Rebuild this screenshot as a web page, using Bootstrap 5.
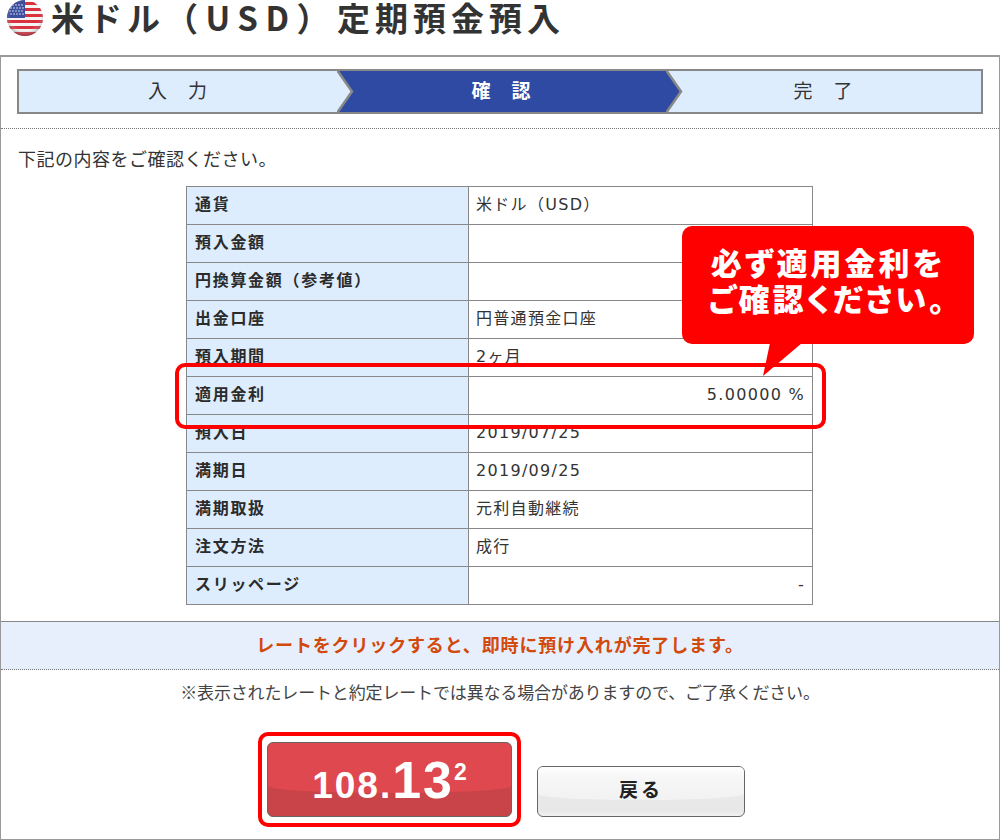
<!DOCTYPE html>
<html lang="ja">
<head>
  <meta charset="UTF-8">
  <meta name="viewport" content="width=device-width, initial-scale=1.0">
  <title>米ドル（USD）定期預金預入</title>
  <link href="https://cdn.jsdelivr.net/npm/bootstrap@5.3.0/dist/css/bootstrap.min.css" rel="stylesheet">
  <style>
    body { font-family: "DejaVu Sans", "Noto Sans CJK JP", sans-serif; color: #333; width: 1000px; height: 840px; overflow: hidden; background: #fff; }
    .page-title { height: 55px; padding: 0 0 19px 7px; gap: 8px; }
    .page-title h1 { font-family: "Noto Sans CJK JP", sans-serif; font-size: 33px; font-weight: 700; letter-spacing: 5px; line-height: 36px; margin: -2px 0 0; color: #333; white-space: nowrap; }
    .page-title h1 span { letter-spacing: 7.5px; }
    .panel { border: 1px solid #999; border-top-width: 2px; height: 785px; position: relative; }
    .step-wrap { padding: 12px 16px 0; border-bottom: 1px dotted #777; height: 72px; }
    .steps { height: 45px; border: 2px solid #888; background: #deedfd; }
    .step { position: relative; font-family: "Noto Sans CJK JP", sans-serif; font-size: 19px; letter-spacing: 1px; color: #333; display: flex; align-items: center; justify-content: center; padding-bottom: 3px; }
    .step-a { width: 318px; }
    .step-b { width: 329px; background: #2f4aa3; color: #fff; font-weight: 700; }
    .step svg { position: absolute; top: -2px; left: 100%; z-index: 2; }
    .intro { font-family: "Noto Sans CJK JP", sans-serif; font-size: 18px; letter-spacing: .5px; margin: 0; padding: 18px 17px 17px; line-height: 22px; }
    table.rate-table { width: 627px; margin: 0 0 0 185px; font-size: 16px; letter-spacing: 1.3px; border-color: #888; }
    table.rate-table th, table.rate-table td { height: 38px; padding: 0 7px 1px 7px; vertical-align: middle; border: 1px solid #888; line-height: 20px; color: #333; box-shadow: none; }
    table.rate-table th { width: 282px; background: #deedfd; font-weight: 700; font-family: "Noto Sans CJK JP", sans-serif; letter-spacing: 1.7px; padding: 0 7px 6px 8px; color: #2b2b2b; }
    .notice { margin-top: 16px; height: 49px; background: #e8effc; border-top: 1px solid #888; border-bottom: 1px dotted #777; color: #d2490c; font-family: "Noto Sans CJK JP", sans-serif; font-weight: 700; font-size: 18px; letter-spacing: .85px; padding-bottom: 2px; }
    .caveat { font-family: "Noto Sans CJK JP", sans-serif; font-size: 17px; letter-spacing: -.15px; margin: 11px 0 0; line-height: 22px; color: #444; }
    .btn-row { margin: 29px 0 0 257px; gap: 16px; }
    .rate-frame { border: 4px solid #f00; border-radius: 10px; padding: 6px 5px; width: 263px; height: 95px; }
    .rate-btn { width: 245px; height: 75px; border: 1px solid #666; border-radius: 6px; background: #c94448; color: #fff; font-family: "Liberation Sans", sans-serif; font-weight: 700; font-size: 37px; line-height: 1; letter-spacing: 2px; padding: 0; position: relative; overflow: hidden; }
    .rate-btn::before { content: ""; position: absolute; left: 0; right: 0; top: 0; height: 68%; background: #de484e; border-radius: 0 0 50% 50% / 0 0 7px 7px; }
    .rate-btn span { position: relative; }
    .rate-btn .big { font-size: 52px; letter-spacing: 2px; }
    .rate-btn .tiny { font-size: 23px; top: -18px; letter-spacing: 0; }
    .back-btn { width: 208px; height: 51px; margin-top: 34px; border: 1px solid #666; border-radius: 6px; background: linear-gradient(#ebebeb 0, #e8e8e8 90%, #f2f2f2 100%); font-family: "Noto Sans CJK JP", sans-serif; font-weight: 700; font-size: 19px; letter-spacing: 3px; color: #222; padding: 0 0 5px; position: relative; overflow: hidden; }
    .back-btn::before { content: ""; position: absolute; left: 0; right: 0; top: 0; height: 68%; background: linear-gradient(#fefefe, #f6f6f6 35%, #f2f2f2); border-radius: 0 0 50% 50% / 0 0 6px 6px; }
    .back-btn span { position: relative; }
    .mark-frame { position: absolute; left: 174px; top: 306px; width: 651px; height: 66px; border: 4px solid #f00; border-radius: 10px; pointer-events: none; }
    .callout { position: absolute; left: 681px; top: 169px; width: 292px; height: 118px; background: #f00; border-radius: 10px; color: #fff; font-family: "Noto Sans CJK JP", sans-serif; font-weight: 900; font-size: 31px; font-feature-settings: "palt"; letter-spacing: 3px; line-height: 36px; text-align: center; padding-top: 18px; }
    .callout svg { position: absolute; left: 81px; top: 117px; }
  </style>
</head>
<body>
  <div class="page-title d-flex align-items-center">
    <svg width="36" height="36" viewBox="0 0 36 36">
      <defs>
        <clipPath id="flagClip"><circle cx="18" cy="18" r="18"/></clipPath>
        <radialGradient id="flagGloss" cx="50%" cy="40%" r="60%">
          <stop offset="70%" stop-color="#fff" stop-opacity="0"/>
          <stop offset="100%" stop-color="#333" stop-opacity=".45"/>
        </radialGradient>
      </defs>
      <g clip-path="url(#flagClip)">
        <rect width="36" height="36" fill="#f4f4f4"/>
        <g fill="#d8323f">
          <rect y="2" width="36" height="3"/>
          <rect y="8" width="36" height="3"/>
          <rect y="14" width="36" height="3"/>
          <rect y="20" width="36" height="3"/>
          <rect y="26" width="36" height="3"/>
          <rect y="32" width="36" height="4"/>
        </g>
        <rect width="18" height="18" fill="#3d4f9f"/>
        <g fill="#fff">
          <circle cx="6" cy="5" r=".7"/><circle cx="9" cy="5" r=".7"/><circle cx="12" cy="5" r=".7"/><circle cx="15" cy="5" r=".7"/>
          <circle cx="4" cy="8" r=".7"/><circle cx="7" cy="8" r=".7"/><circle cx="10" cy="8" r=".7"/><circle cx="13" cy="8" r=".7"/><circle cx="16" cy="8" r=".7"/>
          <circle cx="3" cy="11" r=".7"/><circle cx="6" cy="11" r=".7"/><circle cx="9" cy="11" r=".7"/><circle cx="12" cy="11" r=".7"/><circle cx="15" cy="11" r=".7"/>
          <circle cx="4" cy="14" r=".7"/><circle cx="7" cy="14" r=".7"/><circle cx="10" cy="14" r=".7"/><circle cx="13" cy="14" r=".7"/><circle cx="16" cy="14" r=".7"/>
        </g>
        <circle cx="18" cy="18" r="18" fill="url(#flagGloss)"/>
      </g>
    </svg>
    <h1>米ドル<span>（USD）</span>定期預金預入</h1>
  </div>

  <div class="panel">
    <div class="step-wrap">
      <div class="steps d-flex">
        <div class="step step-a">入　力
          <svg width="18" height="45" viewBox="0 0 18 45"><path d="M0 1 L15 22.5 L0 44 Z" fill="#deedfd"/><path d="M0 1 L15 22.5 L0 44" fill="none" stroke="#888" stroke-width="2.5"/></svg>
        </div>
        <div class="step step-b">確　認
          <svg width="18" height="45" viewBox="0 0 18 45"><path d="M0 1 L15 22.5 L0 44 Z" fill="#2f4aa3"/><path d="M0 1 L15 22.5 L0 44" fill="none" stroke="#888" stroke-width="2.5"/></svg>
        </div>
        <div class="step flex-fill">完　了</div>
      </div>
    </div>

    <p class="intro">下記の内容をご確認ください。</p>

    <table class="table rate-table mb-0">
      <tbody>
        <tr><th>通貨</th><td>米ドル（USD）</td></tr>
        <tr><th>預入金額</th><td class="text-end"></td></tr>
        <tr><th>円換算金額（参考値）</th><td class="text-end"></td></tr>
        <tr><th>出金口座</th><td>円普通預金口座</td></tr>
        <tr><th>預入期間</th><td>2ヶ月</td></tr>
        <tr><th>適用金利</th><td class="text-end">5.00000 %</td></tr>
        <tr><th>預入日</th><td>2019/07/25</td></tr>
        <tr><th>満期日</th><td>2019/09/25</td></tr>
        <tr><th>満期取扱</th><td>元利自動継続</td></tr>
        <tr><th>注文方法</th><td>成行</td></tr>
        <tr><th>スリッページ</th><td class="text-end">-</td></tr>
      </tbody>
    </table>

    <div class="notice d-flex align-items-center justify-content-center">レートをクリックすると、即時に預け入れが完了します。</div>
    <p class="caveat text-center">※表示されたレートと約定レートでは異なる場合がありますので、ご了承ください。</p>

    <div class="btn-row d-flex align-items-start">
      <div class="rate-frame">
        <button type="button" class="btn rate-btn"><span>108.</span><span class="big">13</span><span class="tiny">2</span></button>
      </div>
      <button type="button" class="btn back-btn"><span>戻る</span></button>
    </div>

    <div class="mark-frame"></div>
    <div class="callout">必ず適用金利を<br>ご確認ください。
      <svg width="40" height="36" viewBox="0 0 40 36"><path d="M7 0 L0 33 L39 0 Z" fill="#f00"/></svg>
    </div>
  </div>

  <script src="https://cdn.jsdelivr.net/npm/bootstrap@5.3.0/dist/js/bootstrap.bundle.min.js"></script>
</body>
</html>
